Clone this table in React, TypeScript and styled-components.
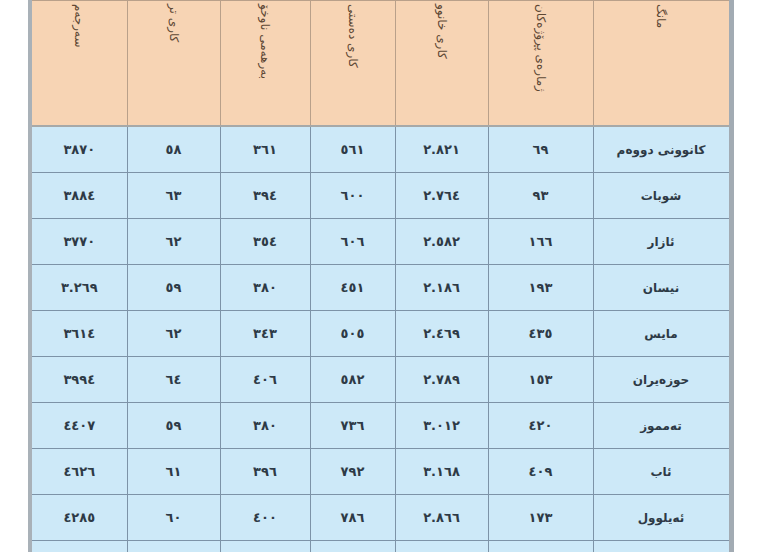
import styled, { createGlobalStyle } from 'styled-components'

const GlobalStyle = createGlobalStyle`
  html, body {
    margin: 0;
    padding: 0;
    background: #ffffff;
    font-family: "DejaVu Sans", "Noto Sans", sans-serif;
  }
`

const Page = styled.div`
  width: 770px;
  height: 552px;
  overflow: hidden;
  padding-left: 28px;
  box-sizing: border-box;
`

const Table = styled.table`
  width: 705px;
  table-layout: fixed;
  border-collapse: collapse;
  border-left: 4px solid #a9b1b8;
  border-right: 5px solid #a2abb3;
`

const HeadCell = styled.th`
  height: 124px;
  padding: 0;
  background: #f7d4b4;
  border: 1px solid #b9a08a;
  border-bottom: 2px solid #a7a9a8;
  vertical-align: top;
`

const HeadLabel = styled.div<{ $offset: number }>`
  writing-mode: vertical-rl;
  margin: ${(p) => p.$offset}px auto 0;
  font-size: 12px;
  font-weight: 400;
  color: #5e4834;
  white-space: nowrap;
  line-height: 1;
`

const Cell = styled.td<{ $name?: boolean }>`
  height: 45px;
  padding: 0;
  background: #cde9f8;
  border: 1px solid #7d93a7;
  text-align: center;
  vertical-align: middle;
  font-size: ${(p) => (p.$name ? '12px' : '13px')};
  font-weight: 700;
  color: #2e3a46;
  white-space: nowrap;
`

const widths = [138, 105, 93, 85, 90, 93, 97]

const headers: { label: string; offset: number }[] = [
  { label: 'مانگ', offset: 3 },
  { label: 'ژمارەی پڕۆژەکان', offset: 3 },
  { label: 'کاری خانوو', offset: 3 },
  { label: 'کاری دەستی', offset: 3 },
  { label: 'بەرهەمی ناوخۆ', offset: 3 },
  { label: 'کاری تر', offset: 3 },
  { label: 'سەرجەم', offset: 3 },
]

const rows: string[][] = [
  ['کانوونی دووەم', '٦٩', '٢.٨٢١', '٥٦١', '٣٦١', '٥٨', '٣٨٧٠'],
  ['شوبات', '٩٣', '٢.٧٦٤', '٦٠٠', '٣٩٤', '٦٣', '٣٨٨٤'],
  ['ئازار', '١٦٦', '٢.٥٨٢', '٦٠٦', '٣٥٤', '٦٢', '٣٧٧٠'],
  ['نیسان', '١٩٣', '٢.١٨٦', '٤٥١', '٣٨٠', '٥٩', '٣.٢٦٩'],
  ['مایس', '٤٣٥', '٢.٤٦٩', '٥٠٥', '٣٤٣', '٦٢', '٣٦١٤'],
  ['حوزەیران', '١٥٣', '٢.٧٨٩', '٥٨٢', '٤٠٦', '٦٤', '٣٩٩٤'],
  ['تەمموز', '٤٢٠', '٣.٠١٢', '٧٣٦', '٣٨٠', '٥٩', '٤٤٠٧'],
  ['ئاب', '٤٠٩', '٣.١٦٨', '٧٩٢', '٣٩٦', '٦١', '٤٦٢٦'],
  ['ئەیلوول', '١٧٣', '٢.٨٦٦', '٧٨٦', '٤٠٠', '٦٠', '٤٢٨٥'],
  ['', '', '', '', '', '', ''],
]

export default function App() {
  return (
    <>
      <GlobalStyle />
      <Page>
        <Table dir="rtl">
          <colgroup>
            {widths.map((w, i) => (
              <col key={i} style={{ width: w }} />
            ))}
          </colgroup>
          <thead>
            <tr>
              {headers.map((h) => (
                <HeadCell key={h.label}>
                  <HeadLabel $offset={h.offset}>{h.label}</HeadLabel>
                </HeadCell>
              ))}
            </tr>
          </thead>
          <tbody>
            {rows.map((r, ri) => (
              <tr key={ri}>
                {r.map((v, i) => (
                  <Cell key={i} $name={i === 0}>
                    {v}
                  </Cell>
                ))}
              </tr>
            ))}
          </tbody>
        </Table>
      </Page>
    </>
  )
}
